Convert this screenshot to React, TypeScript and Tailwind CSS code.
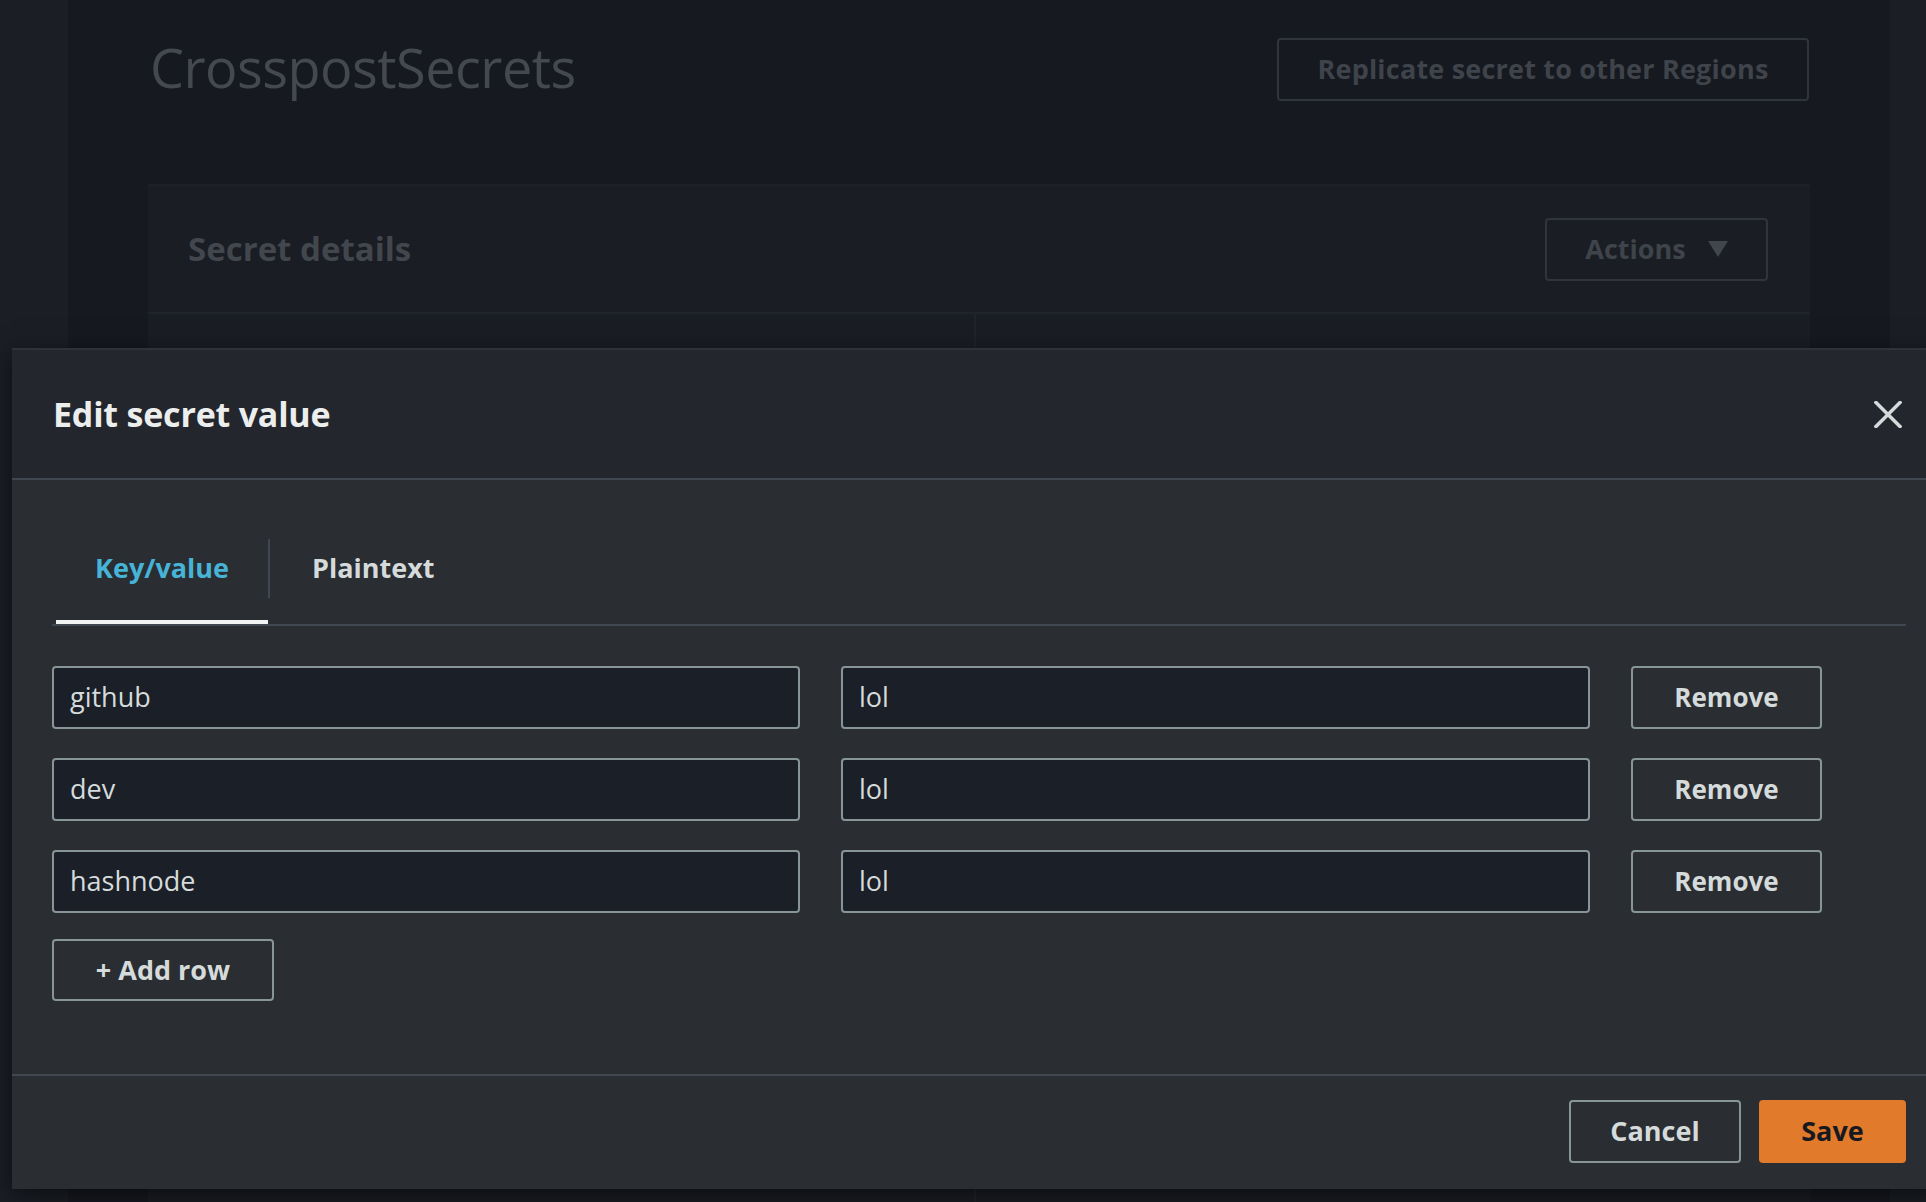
import React from 'react';

const ROWS = [
  { key: 'github', value: 'lol' },
  { key: 'dev', value: 'lol' },
  { key: 'hashnode', value: 'lol' },
];

function CloseIcon() {
  return (
    <svg width="28" height="27" viewBox="0 0 28 27" fill="none" aria-hidden>
      <path d="M2 1.5 L26 25.5 M26 1.5 L2 25.5" stroke="#d5dbdb" strokeWidth="3.5" strokeLinecap="square" />
    </svg>
  );
}

function Background() {
  return (
    <div className="flex h-full">
      <aside className="w-[68px] shrink-0 bg-[#1b1e25]" />
      <main className="flex-1 bg-[#161920]">
        <div className="mt-[38px] flex h-[63px] items-center justify-between pl-[82px] pr-[81px]">
          <h1 className="mt-[-6px] text-[54px] font-normal leading-none tracking-[-0.5px] text-[#44484f]">
            CrosspostSecrets
          </h1>
          <button
            type="button"
            className="flex h-[63px] w-[532px] items-center justify-center rounded-[4px] border-2 border-[#30343b] text-[27px] font-bold tracking-[0.2px] text-[#3f434a]"
          >
            Replicate secret to other Regions
          </button>
        </div>

        <section className="mx-[80px] mt-[83px] h-[1100px] border-t-2 border-[#1d2027] bg-[#1a1d24]">
          <div className="flex h-[126px] items-center justify-between pl-[40px] pr-[42px]">
            <h2 className="text-[33px] font-bold text-[#42464d]">Secret details</h2>
            <button
              type="button"
              className="flex h-[63px] w-[223px] items-center justify-center gap-[22px] rounded-[4px] border-2 border-[#30343b] text-[27px] font-bold text-[#3f434a]"
            >
              Actions
              <svg width="20" height="16" viewBox="0 0 20 16" aria-hidden>
                <path d="M0 0 H20 L10 16 Z" fill="#41454c" />
              </svg>
            </button>
          </div>
          <div className="grid grid-cols-[828px_1fr] border-t-2 border-[#1f232a]">
            <div className="h-[900px] border-r-2 border-[#1f232a]" />
            <div />
          </div>
        </section>
      </main>
      <div className="w-[36px] shrink-0 bg-[#1b1e25]" />
    </div>
  );
}

function EditSecretModal() {
  return (
    <div className="absolute left-[12px] top-[348px] flex h-[841px] w-[1934px] flex-col shadow-[0_6px_24px_rgba(0,0,0,0.55)]">
      <header className="flex h-[130px] items-center justify-between border-t-2 border-[#2e3239] bg-[#23262c] pl-[41px] pr-[44px]">
        <h2 className="text-[34px] font-bold tracking-[-0.2px] text-[#eceeee]">Edit secret value</h2>
        <CloseIcon />
      </header>

      <div className="flex flex-1 flex-col border-t-2 border-[#414750] bg-[#2a2d32] px-[40px] pt-[32px]">
        <div className="flex h-[114px] items-stretch border-b-2 border-[#414750]">
          <div className="relative ml-[4px] flex w-[212px] items-center justify-center">
            <span className="text-[27px] font-bold text-[#47b3d6]">Key/value</span>
            <span className="absolute bottom-0 left-0 h-[4px] w-full bg-[#f2f3f3]" />
          </div>
          <div className="h-[59px] w-[2px] self-center bg-[#414750]" />
          <div className="flex items-center px-[42px]">
            <span className="text-[27px] font-bold text-[#d5dbdb]">Plaintext</span>
          </div>
        </div>

        <div className="mt-[40px] grid grid-cols-[748px_749px_191px] gap-x-[41px] gap-y-[29px]">
          {ROWS.map((row) => (
            <React.Fragment key={row.key}>
              <div className="flex h-[63px] items-center rounded-[4px] border-2 border-[#879596] bg-[#1b1f27] px-[16px] text-[27px] font-medium text-[#d5dbdb]">
                {row.key}
              </div>
              <div className="flex h-[63px] items-center rounded-[4px] border-2 border-[#879596] bg-[#1b1f27] px-[16px] text-[27px] font-medium text-[#d5dbdb]">
                {row.value}
              </div>
              <button
                type="button"
                className="flex h-[63px] items-center justify-center rounded-[4px] border-2 border-[#879596] text-[26px] font-bold text-[#d5dbdb]"
              >
                Remove
              </button>
            </React.Fragment>
          ))}
        </div>

        <button
          type="button"
          className="mt-[26px] flex h-[62px] w-[222px] items-center justify-center rounded-[4px] border-2 border-[#879596] text-[27px] font-bold text-[#d5dbdb]"
        >
          + Add row
        </button>
      </div>

      <footer className="flex h-[115px] items-start justify-end gap-[18px] border-t-2 border-[#414750] bg-[#2a2d32] pr-[40px] pt-[24px]">
        <button
          type="button"
          className="flex h-[63px] w-[172px] items-center justify-center rounded-[4px] border-2 border-[#879596] text-[27px] font-bold text-[#d5dbdb]"
        >
          Cancel
        </button>
        <button
          type="button"
          className="flex h-[63px] w-[147px] items-center justify-center rounded-[4px] bg-[#e27a2c] text-[27px] font-bold text-[#16191f]"
        >
          Save
        </button>
      </footer>
    </div>
  );
}

export default function App() {
  return (
    <div className="relative h-[1202px] w-[1926px] overflow-hidden bg-[#161920] font-['Open_Sans',sans-serif]">
      <Background />
      <EditSecretModal />
    </div>
  );
}
